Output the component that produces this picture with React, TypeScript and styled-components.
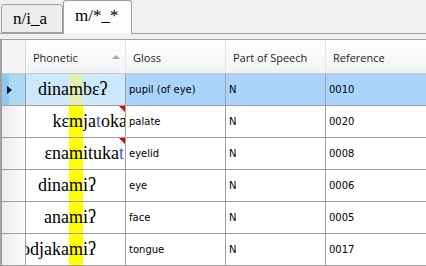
import React from 'react';
import styled, { createGlobalStyle } from 'styled-components';

const GlobalStyle = createGlobalStyle`
  html, body {
    margin: 0;
    padding: 0;
    background: #f0f0f0;
  }
`;

interface Entry {
  before: string,
  pivot: string,
  after: string,
  blueAt?: number,
  gloss: string,
  pos: string,
  reference: string,
  flagged?: boolean,
  selected?: boolean
}

const entries: Array<Entry> = [
  { before: "dina", pivot: "m", after: "bɛʔ", gloss: "pupil (of eye)", pos: "N", reference: "0010", selected: true },
  { before: "kɛ", pivot: "m", after: "jatoka", blueAt: 2, gloss: "palate", pos: "N", reference: "0020", flagged: true },
  { before: "ɛna", pivot: "m", after: "itukat", blueAt: 5, gloss: "eyelid", pos: "N", reference: "0008", flagged: true },
  { before: "dina", pivot: "m", after: "iʔ", gloss: "eye", pos: "N", reference: "0006" },
  { before: "ana", pivot: "m", after: "iʔ", gloss: "face", pos: "N", reference: "0005" },
  { before: "odjaka", pivot: "m", after: "iʔ", gloss: "tongue", pos: "N", reference: "0017" },
];

export default function App() {
  return (
    <Page>
      <GlobalStyle />
      <TabStrip>
        <Tab>n/i_a</Tab>
        <Tab active>m/*_*</Tab>
      </TabStrip>
      <Gap />
      <Grid>
        <HeaderRow>
          <CornerCell />
          <HeadCell>Phonetic<SortArrow /></HeadCell>
          <HeadCell>Gloss</HeadCell>
          <HeadCell>Part of Speech</HeadCell>
          <HeadCell last>Reference</HeadCell>
        </HeaderRow>
        {entries.map((e, i) => (
          <Row key={i}>
            <RowHead selected={e.selected}>{e.selected && <CurrentMark />}</RowHead>
            <PhonCell selected={e.selected}>
              <Before>{e.before}</Before>
              <Pivot selected={e.selected}>{e.pivot}</Pivot>
              <After>
                {e.after.split('').map((ch, k) => (
                  k === e.blueAt ? <Blue key={k}>{ch}</Blue> : ch
                ))}
              </After>
              {e.flagged && <Flag />}
            </PhonCell>
            <Cell selected={e.selected}>{e.gloss}</Cell>
            <Cell selected={e.selected}>{e.pos}</Cell>
            <Cell selected={e.selected} last>{e.reference}</Cell>
          </Row>
        ))}
      </Grid>
    </Page>
  );
}

const Page = styled.div`
  width: 426px;
  height: 266px;
  overflow: hidden;
  background: #f0f0f0;
`;

const TabStrip = styled.div`
  height: 33px;
  display: flex;
  align-items: flex-end;
  padding-left: 1px;
  border-bottom: 1px solid #a0a0a0;
`;

const Tab = styled.div<{ active?: boolean }>`
  box-sizing: border-box;
  height: ${p => p.active ? 34 : 29}px;
  margin-bottom: ${p => p.active ? -1 : 0}px;
  padding: ${p => p.active ? '4px 13px 0 11px' : '3px 15px 0 11px'};
  border: 1px solid #a0a0a0;
  border-bottom: ${p => p.active ? 'none' : '1px solid #a0a0a0'};
  border-radius: 3px 3px 0 0;
  background: ${p => p.active ? '#fcfcfc' : '#ececec'};
  font-family: "Liberation Serif", serif;
  font-size: 17px;
  line-height: 22px;
  color: #000;
`;

const Gap = styled.div`
  height: 5px;
`;

const Grid = styled.div`
  border-top: 1px solid #a0a0a0;
  border-left: 2px solid #a0a0a0;
  background: #fff;
`;

const columns = '24px 100px 100px 100px 1fr';

const HeaderRow = styled.div`
  display: grid;
  grid-template-columns: ${columns};
  height: 34px;
  box-sizing: border-box;
  border-bottom: 1px solid #c8c8c8;
  background: linear-gradient(#ffffff, #f1f2f4);
`;

const CornerCell = styled.div`
  background: #f4f4f4;
  border-right: 1px solid #d8d8d8;
`;

const HeadCell = styled.div<{ last?: boolean }>`
  position: relative;
  display: flex;
  align-items: center;
  padding-left: 7px;
  padding-top: 2px;
  border-right: ${p => p.last ? 'none' : '1px solid #e4e4e4'};
  font-family: "Open Sans", sans-serif;
  font-size: 11px;
  color: #1e1e1e;
`;

const SortArrow = styled.span`
  position: absolute;
  right: 5px;
  top: 15px;
  width: 0;
  height: 0;
  border-left: 4px solid transparent;
  border-right: 4px solid transparent;
  border-bottom: 4px solid #a8a8a8;
`;

const Row = styled.div`
  display: grid;
  grid-template-columns: ${columns};
  height: 32px;
  box-sizing: border-box;
  border-bottom: 1px solid #a0a0a0;
`;

const RowHead = styled.div<{ selected?: boolean }>`
  display: flex;
  align-items: center;
  padding-left: 5px;
  border-right: 1px solid #a0a0a0;
  background: ${p => p.selected
    ? 'linear-gradient(90deg, #8ec9ef 0px, #8ec9ef 7px, #aad8f6 7px)'
    : 'linear-gradient(90deg, #ececee, #f8f8f8 18px, #ffffff)'};
`;

const CurrentMark = styled.span`
  width: 0;
  height: 0;
  border-left: 5px solid #000;
  border-top: 4px solid transparent;
  border-bottom: 4px solid transparent;
`;

const PhonCell = styled.div<{ selected?: boolean }>`
  position: relative;
  display: grid;
  grid-template-columns: 43px 14px 1fr;
  overflow: hidden;
  border-right: 1px solid #a0a0a0;
  background: ${p => p.selected ? '#cce8ff' : '#fff'};
  font-family: "Liberation Serif", serif;
  font-size: 18px;
  line-height: 31px;
  color: #000;
  white-space: nowrap;
`;

const Before = styled.span`
  display: flex;
  justify-content: flex-end;
  overflow: hidden;
`;

const Pivot = styled.span<{ selected?: boolean }>`
  display: flex;
  justify-content: center;
  background: ${p => p.selected ? '#e2efb2' : '#ffff00'};
`;

const After = styled.span`
  overflow: hidden;
`;

const Blue = styled.span`
  color: #3366cc;
`;

const Flag = styled.span`
  position: absolute;
  top: 0;
  right: 0;
  width: 0;
  height: 0;
  border-top: 6px solid #e00000;
  border-left: 6px solid transparent;
`;

const Cell = styled.div<{ selected?: boolean, last?: boolean }>`
  display: flex;
  align-items: center;
  padding-left: 3px;
  overflow: hidden;
  white-space: nowrap;
  border-right: ${p => p.last ? 'none' : '1px solid #a0a0a0'};
  background: ${p => p.selected ? '#aad4fc' : '#fff'};
  font-family: "DejaVu Sans", sans-serif;
  font-size: 10px;
  color: #000;
`;
